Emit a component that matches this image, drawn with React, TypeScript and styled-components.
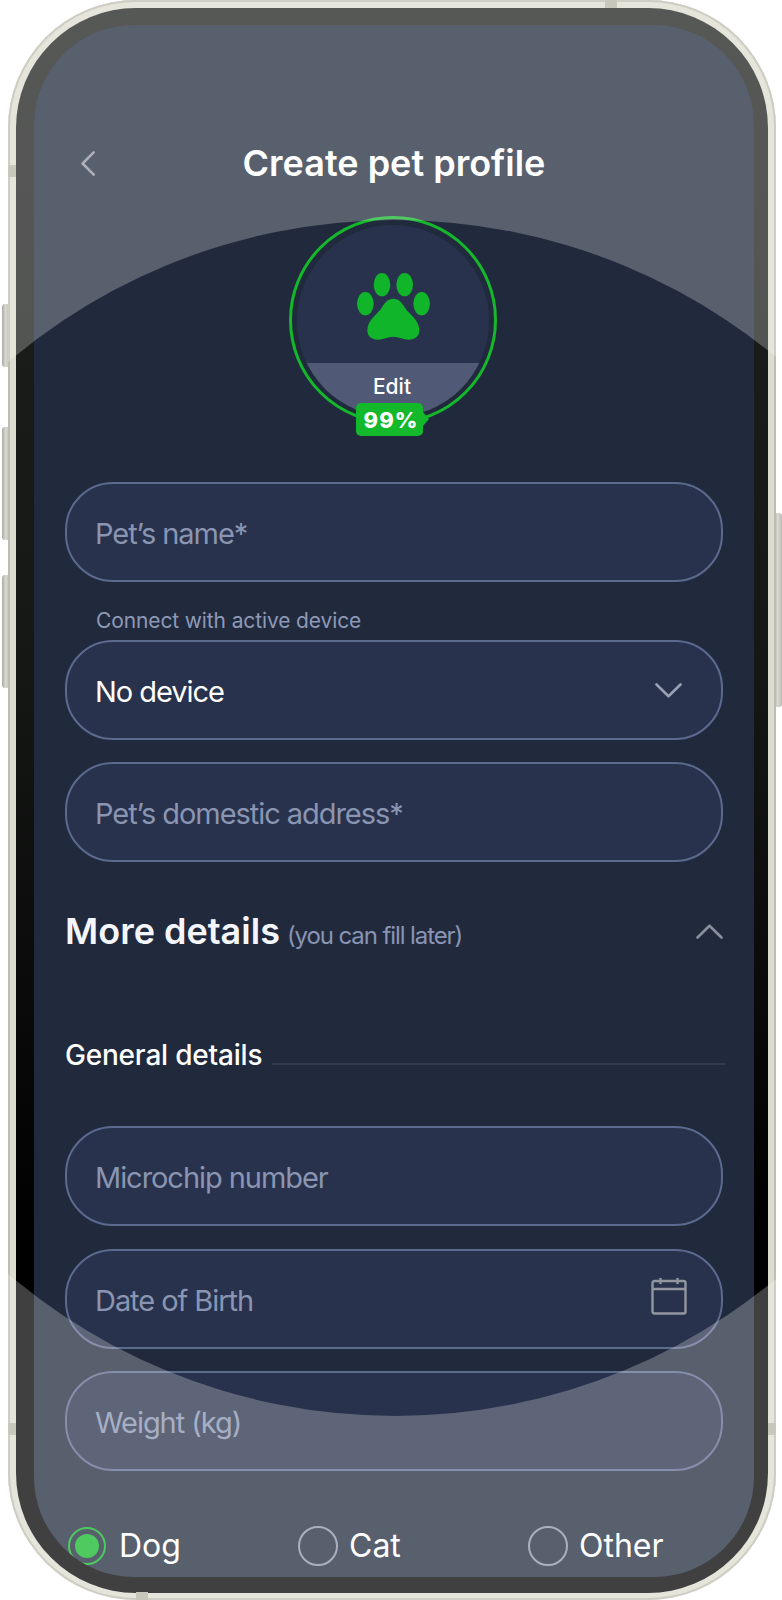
import React from 'react'
import styled, { createGlobalStyle } from 'styled-components'

const GlobalStyle = createGlobalStyle`
  html, body {
    margin: 0;
    padding: 0;
    background: #ffffff;
  }

  body {
    font-family: Inter, "Liberation Sans", sans-serif;
  }
`

const Stage = styled.div`
  position: relative;
  width: 782px;
  height: 1600px;
  padding: 0 6px 0 8px;
  box-sizing: border-box;
  overflow: hidden;
`

const SideKey = styled.div<{ $side: 'left' | 'right'; $top: number; $height: number }>`
  position: absolute;
  top: ${(p) => p.$top}px;
  height: ${(p) => p.$height}px;
  ${(p) => (p.$side === 'left' ? 'left: 2px;' : 'right: 0;')}
  width: 8px;
  border-radius: 3px;
  background: linear-gradient(90deg, #a9a9a3, #d9d9d3 45%, #bcbcb5);
`

const Phone = styled.div`
  position: relative;
  height: 100%;
  box-sizing: border-box;
  padding: 8px 8px 7px;
  border-radius: 128px;
  background: #dddcd0;
  box-shadow: inset 0 0 0 2px #bfbeb0;
  overflow: hidden;
`

const Band = styled.div<{ $edge: 'left' | 'right' | 'top' | 'bottom'; $at: number }>`
  position: absolute;
  background: #b5b4a5;
  ${(p) => (p.$edge === 'left' || p.$edge === 'right'
    ? `${p.$edge}: 0; top: ${p.$at}px; width: 8px; height: 12px;`
    : `${p.$edge}: 0; left: ${p.$at}px; width: 12px; height: 8px;`)}
`

const Bezel = styled.div`
  height: 100%;
  box-sizing: border-box;
  padding: 17px 14px 16px 18px;
  border-radius: 120px;
  background: linear-gradient(180deg, #1e201e 0, #161816 40%, #000000 78%);
`

const Screen = styled.div`
  display: flex;
  flex-direction: column;
  height: 100%;
  box-sizing: border-box;
  padding: 0 31px;
  border-radius: 100px;
  background: #212a3d;
  overflow: hidden;
`

// white veil over the whole phone with a round hole cut out of it
const Spotlight = styled.div`
  position: absolute;
  left: -211px;
  top: 220px;
  width: 1196px;
  height: 1196px;
  border-radius: 50%;
  box-shadow: 0 0 0 1400px rgba(255, 255, 255, 0.25);
  pointer-events: none;
`

const Header = styled.header`
  display: flex;
  align-items: center;
  justify-content: center;
  position: relative;
  margin-top: 117px;
  height: 42px;
`

const BackIcon = styled.svg`
  position: absolute;
  left: 16px;
  top: 9px;
`

const Title = styled.h1`
  margin: 0;
  font-size: 36px;
  line-height: 42px;
  font-weight: 600;
  color: #ffffff;
`

const AvatarWrap = styled.div`
  position: relative;
  align-self: center;
  width: 208px;
  height: 208px;
  margin: 32px 2px 0 0;
  box-sizing: border-box;
  border: 3px solid #14b82b;
  border-radius: 50%;
`

const Avatar = styled.div`
  position: absolute;
  left: 5px;
  top: 6px;
  width: 192px;
  height: 192px;
  display: flex;
  flex-direction: column;
  border-radius: 50%;
  background: #28324c;
  overflow: hidden;
`

const AvatarBody = styled.div`
  flex: 0 0 138px;
  display: flex;
  align-items: center;
  justify-content: center;
  padding-top: 24px;
  box-sizing: border-box;
`

const EditBand = styled.div`
  flex: 1;
  display: flex;
  justify-content: center;
  padding: 11px 2px 0 0;
  font-size: 21px;
  line-height: 26px;
  font-weight: 500;
  color: #ffffff;
  background: #505a76;
`

const Badge = styled.div`
  position: absolute;
  left: 64px;
  top: 184px;
  width: 67px;
  height: 33px;
  padding-left: 3px;
  box-sizing: border-box;
  display: flex;
  align-items: center;
  justify-content: center;
  border-radius: 5px;
  font-size: 22px;
  font-weight: 800;
  letter-spacing: 1px;
  color: #ffffff;
  background: #14b82b;

  &::after {
    content: '';
    position: absolute;
    right: -6px;
    top: 9px;
    border-left: 6px solid #14b82b;
    border-top: 7px solid transparent;
    border-bottom: 7px solid transparent;
  }
`

const Form = styled.form`
  display: flex;
  flex-direction: column;
  margin-top: 58px;
`

const Field = styled.div<{ $gap?: number }>`
  display: flex;
  align-items: center;
  justify-content: space-between;
  flex: 0 0 100px;
  box-sizing: border-box;
  margin-bottom: ${(p) => p.$gap ?? 22}px;
  padding: 0 34px 0 28px;
  border: 2px solid #5d6a90;
  border-radius: 48px;
  background: #28324c;
`

const Placeholder = styled.span<{ $filled?: boolean }>`
  margin-top: 4px;
  font-size: 29px;
  line-height: 36px;
  letter-spacing: -1.05px;
  color: ${(p) => (p.$filled ? '#ffffff' : '#8a95b2')};
`

const FieldLabel = styled.label`
  margin: 0 0 5px 31px;
  font-size: 21px;
  line-height: 28px;
  letter-spacing: -0.12px;
  color: #8e99b8;
`

const Chevron = styled.svg<{ $inset?: number }>`
  margin-right: ${(p) => p.$inset ?? 0}px;
`

const CalendarSvg = styled.svg`
  margin-bottom: 6px;
`

const MoreRow = styled.div`
  display: flex;
  align-items: center;
  justify-content: space-between;
  margin-top: 47px;
  height: 44px;
`

const MoreTitle = styled.h2`
  margin: 0;
  padding-top: 4px;
  font-size: 36px;
  line-height: 44px;
  font-weight: 600;
  color: #f4f6fc;

  small {
    margin-left: 7px;
    font-size: 24px;
    font-weight: 400;
    letter-spacing: -1.1px;
    color: #8a94b4;
  }
`

const SectionRow = styled.div`
  display: flex;
  align-items: flex-end;
  gap: 10px;
  margin: 85px 0 54px;
`

const SectionTitle = styled.h3`
  margin: 0;
  font-size: 28px;
  line-height: 34px;
  font-weight: 500;
  letter-spacing: -0.2px;
  color: #ffffff;
`

const SectionLine = styled.div`
  flex: 1;
  height: 2px;
  margin: 0 -2px 7px 0;
  background: #323b50;
`

const RadioRow = styled.div`
  display: grid;
  grid-template-columns: repeat(3, 230px);
  margin: 53px 0 0 3px;
`

const RadioItem = styled.div`
  display: flex;
  align-items: center;
  gap: 11px;
  font-size: 32px;
  line-height: 42px;
  padding-top: 1px;
  color: #ffffff;
`

const RadioMark = styled.span<{ $checked?: boolean }>`
  display: flex;
  align-items: center;
  justify-content: center;
  width: ${(p) => (p.$checked ? 38 : 40)}px;
  height: ${(p) => (p.$checked ? 38 : 40)}px;
  margin-right: ${(p) => (p.$checked ? 2 : 0)}px;
  box-sizing: border-box;
  border: 2px solid ${(p) => (p.$checked ? '#14b82b' : '#8f95aa')};
  border-radius: 50%;

  &::after {
    content: '';
    display: ${(p) => (p.$checked ? 'block' : 'none')};
    width: 24px;
    height: 24px;
    border-radius: 50%;
    background: #14b82b;
  }
`

const PawIcon = () => (
  <svg width="73" height="67" viewBox="260 218 219 201" fill="#11b52a">
    <ellipse cx="285" cy="310" rx="25" ry="35" />
    <ellipse cx="335" cy="253" rx="25" ry="35" />
    <ellipse cx="403" cy="253" rx="25" ry="35" />
    <ellipse cx="454" cy="310" rx="25" ry="35" />
    <path d="M369 295C352 295 343 308 334 322C322 342 291 358 291 390C291 409 305 418 322 418C340 418 352 409 369 409C386 409 398 418 416 418C433 418 447 409 447 390C447 358 416 342 404 322C395 308 386 295 369 295Z" />
  </svg>
)

const CalendarIcon = () => (
  <CalendarSvg width="36" height="38" viewBox="0 0 36 38" fill="none" stroke="#92969f" strokeWidth="2.4">
    <rect x="1.5" y="4" width="33" height="32.5" rx="2" />
    <path d="M1.5 12H34.5M9.5 1V7M26.5 1V7" />
  </CalendarSvg>
)

const App = () => {
  return (
    <Stage>
      <GlobalStyle />
      <SideKey $side="left" $top={304} $height={63} />
      <SideKey $side="left" $top={427} $height={113} />
      <SideKey $side="left" $top={575} $height={113} />
      <SideKey $side="right" $top={513} $height={194} />

      <Phone>
        <Band $edge="left" $at={165} />
        <Band $edge="left" $at={1423} />
        <Band $edge="right" $at={1423} />
        <Band $edge="top" $at={597} />
        <Band $edge="bottom" $at={128} />

        <Bezel>
          <Screen>
            <Header>
              <BackIcon width="14" height="25" viewBox="0 0 14 25" fill="none" stroke="#9094a0" strokeWidth="2.6" strokeLinecap="round" strokeLinejoin="round">
                <path d="M12.7 1.4L1.6 12.5L12.7 23.6" />
              </BackIcon>
              <Title>Create pet profile</Title>
            </Header>

            <AvatarWrap>
              <Avatar>
                <AvatarBody>
                  <PawIcon />
                </AvatarBody>
                <EditBand>Edit</EditBand>
              </Avatar>
              <Badge>99%</Badge>
            </AvatarWrap>

            <Form>
              <Field $gap={25}>
                <Placeholder>Pet’s name*</Placeholder>
              </Field>

              <FieldLabel>Connect with active device</FieldLabel>
              <Field>
                <Placeholder $filled>No device</Placeholder>
                <Chevron $inset={5} width="27" height="15" viewBox="0 0 27 15" fill="none" stroke="#9aa0b4" strokeWidth="2.6" strokeLinecap="round" strokeLinejoin="round">
                  <path d="M1.5 1.5L13.5 13.2L25.5 1.5" />
                </Chevron>
              </Field>

              <Field $gap={0}>
                <Placeholder>Pet’s domestic address*</Placeholder>
              </Field>

              <MoreRow>
                <MoreTitle>
                  More details<small>(you can fill later)</small>
                </MoreTitle>
                <Chevron width="27" height="15" viewBox="0 0 27 15" fill="none" stroke="#8a8f9e" strokeWidth="2.6" strokeLinecap="round" strokeLinejoin="round">
                  <path d="M1.5 13.5L13.5 1.8L25.5 13.5" />
                </Chevron>
              </MoreRow>

              <SectionRow>
                <SectionTitle>General details</SectionTitle>
                <SectionLine />
              </SectionRow>

              <Field $gap={23}>
                <Placeholder>Microchip number</Placeholder>
              </Field>

              <Field>
                <Placeholder>Date of Birth</Placeholder>
                <CalendarIcon />
              </Field>

              <Field $gap={0}>
                <Placeholder>Weight (kg)</Placeholder>
              </Field>
            </Form>

            <RadioRow>
              <RadioItem>
                <RadioMark $checked />
                Dog
              </RadioItem>
              <RadioItem>
                <RadioMark />
                Cat
              </RadioItem>
              <RadioItem>
                <RadioMark />
                Other
              </RadioItem>
            </RadioRow>
          </Screen>
        </Bezel>

        <Spotlight />
      </Phone>
    </Stage>
  )
}

export default App
